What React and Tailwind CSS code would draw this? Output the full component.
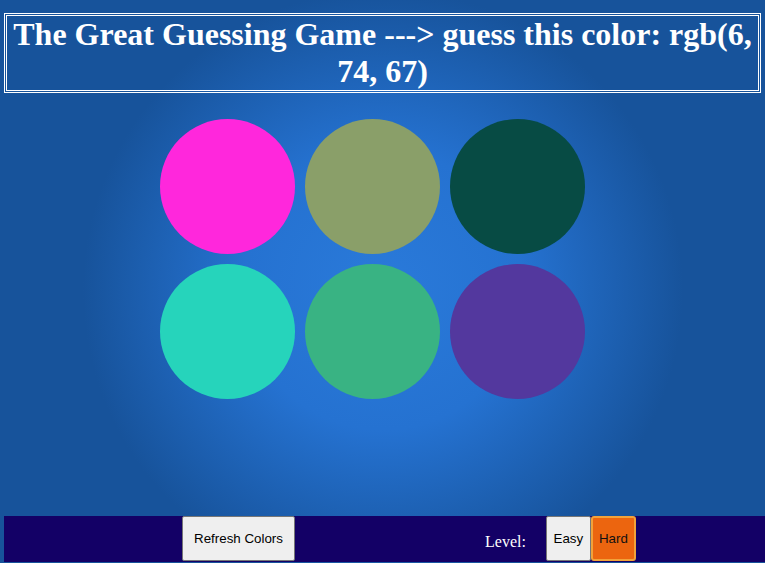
import React, { useState } from "react";

const colors = ["#ff27dc", "#8a9f69", "#074b44", "#26d4bb", "#39b383", "#53389e"];

export default function App() {
  const [level, setLevel] = useState("hard");

  return (
    <div className="h-[563px] w-[765px] overflow-hidden flex flex-col bg-[radial-gradient(circle_at_383px_290px,#2a7ada_0px,#2572d1_140px,#17539b_300px)] font-['Liberation_Serif',serif]">
      <h1 className="mt-[13px] mx-[4px] border-[3px] border-double border-white text-white text-[32px] font-bold leading-[37px] text-center">
        The Great Guessing Game ---&gt; guess this color: rgb(6, 74, 67)
      </h1>

      <div className="mt-[26px] ml-[160px] w-[425px] grid grid-cols-3 gap-x-[9.5px] gap-y-[10px]">
        {colors.map((c) => (
          <div key={c} className="w-[135px] h-[135px] rounded-full" style={{ backgroundColor: c }} />
        ))}
      </div>

      <div className="mt-auto mb-[1px] ml-[4px] h-[46px] flex items-stretch bg-[#130066]">
        <button className="ml-[178px] w-[113px] h-[45px] bg-[#efefef] border border-[#767676] rounded-[2px] text-[13.33px] text-black font-['Liberation_Sans',Arial,sans-serif]">
          Refresh Colors
        </button>
        <span className="ml-[190px] self-end mb-[8px] text-white text-[16px]">Level:</span>
        <div className="ml-[20px] flex">
          <button
            onClick={() => setLevel("easy")}
            className={`w-[45px] h-[45px] border rounded-[2px] text-[13.33px] text-black font-['Liberation_Sans',Arial,sans-serif] ${
              level === "easy" ? "bg-[#ec650f] border-[#f2a23a]" : "bg-[#efefef] border-[#767676]"
            }`}
          >
            Easy
          </button>
          <button
            onClick={() => setLevel("hard")}
            className={`w-[45px] h-[45px] rounded-[3px] text-[13.33px] text-[#111] font-['Liberation_Sans',Arial,sans-serif] ${
              level === "hard" ? "bg-[#ec650f] border-2 border-[#f2a23a]" : "bg-[#efefef] border border-[#767676]"
            }`}
          >
            Hard
          </button>
        </div>
      </div>
    </div>
  );
}
